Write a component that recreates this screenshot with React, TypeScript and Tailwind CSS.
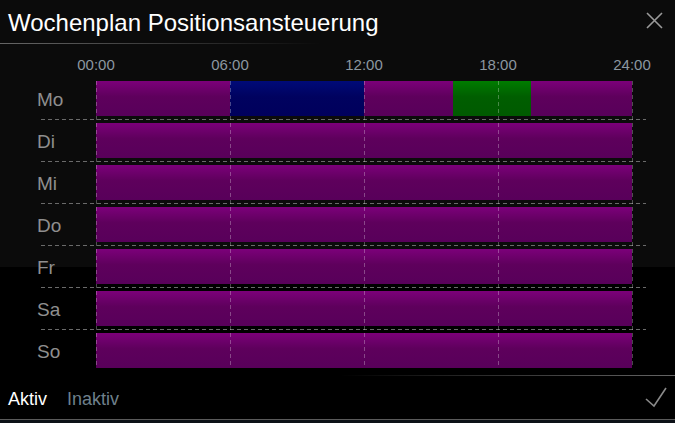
import React from "react";

type Segment = { from: number; to: number; mode: "aktiv" | "inaktiv" | "auf" };

const days: { name: string; segments: Segment[] }[] = [
  {
    name: "Mo",
    segments: [
      { from: 0, to: 6, mode: "aktiv" },
      { from: 6, to: 12, mode: "inaktiv" },
      { from: 12, to: 16, mode: "aktiv" },
      { from: 16, to: 19.5, mode: "auf" },
      { from: 19.5, to: 24, mode: "aktiv" },
    ],
  },
  { name: "Di", segments: [{ from: 0, to: 24, mode: "aktiv" }] },
  { name: "Mi", segments: [{ from: 0, to: 24, mode: "aktiv" }] },
  { name: "Do", segments: [{ from: 0, to: 24, mode: "aktiv" }] },
  { name: "Fr", segments: [{ from: 0, to: 24, mode: "aktiv" }] },
  { name: "Sa", segments: [{ from: 0, to: 24, mode: "aktiv" }] },
  { name: "So", segments: [{ from: 0, to: 24, mode: "aktiv" }] },
];

const ticks = ["00:00", "06:00", "12:00", "18:00", "24:00"];

const modeClass: Record<Segment["mode"], string> = {
  aktiv: "bg-[linear-gradient(to_bottom,#7c007a,#5e005c_45%,#58005a)]",
  inaktiv: "bg-[linear-gradient(to_bottom,#000a78,#00025f_45%,#00005c)]",
  auf: "bg-[linear-gradient(to_bottom,#007c00,#005e00_45%,#005a00)]",
};

export default function App() {
  return (
    <div
      className="w-[675px] h-[423px] flex flex-col overflow-hidden bg-[linear-gradient(to_bottom,#0b0b0b_267px,#000_267px)]"
      style={{ fontFamily: '"Liberation Sans", Arial, sans-serif' }}
    >
      {/* Header */}
      <div className="h-[43px] flex justify-between">
        <h1 className="pl-2 pt-[11px] text-[24px] leading-[24px] text-white">
          Wochenplan Positionsansteuerung
        </h1>
        <svg
          width="19"
          height="19"
          viewBox="0 0 19 19"
          className="mt-[11px] mr-[11px]"
          fill="none"
          stroke="#9a9a9a"
          strokeWidth="1.6"
        >
          <path d="M2 2 L17 17 M17 2 L2 17" />
        </svg>
      </div>
      <div className="h-px w-[320px] bg-gradient-to-r from-[#666] to-transparent" />

      {/* Time axis */}
      <div className="h-[37px] flex">
        <div className="w-[96px] shrink-0" />
        <div className="relative w-[536px]">
          {ticks.map((t, i) => (
            <span
              key={t}
              className="absolute top-[13px] -translate-x-1/2 text-[15px] leading-[15px] text-[#8c97a0]"
              style={{ left: `${(i / 4) * 100}%` }}
            >
              {t}
            </span>
          ))}
        </div>
      </div>

      {/* Grid */}
      <div className="relative flex flex-col">
        {days.map((d, i) => (
          <React.Fragment key={d.name}>
            {i > 0 && (
              <div className="h-[7px] py-[3px]">
                <div className="ml-[41px] w-[605px] h-px bg-[repeating-linear-gradient(to_right,#6a6a6a_0_4px,transparent_4px_7px)]" />
              </div>
            )}
            <div className="flex h-[35px]">
              <div className="w-[96px] shrink-0 pl-[37px] h-[35px] text-[19px] leading-[38px] text-[#8f8f8f]">
                {d.name}
              </div>
              <div className="w-[536px] flex">
                {d.segments.map((s, j) => (
                  <div
                    key={j}
                    className={modeClass[s.mode]}
                    style={{ width: `${((s.to - s.from) / 24) * 100}%` }}
                  />
                ))}
              </div>
            </div>
          </React.Fragment>
        ))}

        {/* vertical hour lines overlay */}
        <div className="absolute inset-y-0 left-[96px] w-[537px] flex justify-between pointer-events-none">
          {ticks.map((t) => (
            <div
              key={t}
              className="w-px h-full bg-[repeating-linear-gradient(to_bottom,rgba(255,255,255,0.28)_0_4px,transparent_4px_7px)]"
            />
          ))}
        </div>
      </div>

      {/* Footer */}
      <div className="mt-[7px] h-px bg-[linear-gradient(to_right,transparent_340px,#666)]" />
      <div className="h-[43px] flex">
        <div className="pt-[14px] pl-2 flex gap-[20px] text-[18px] leading-[18px]">
          <span className="text-white">Aktiv</span>
          <span className="text-[#6f808c]">Inaktiv</span>
        </div>
        <svg
          width="24"
          height="22"
          viewBox="0 0 24 22"
          className="ml-auto mt-[10px] mr-[7px]"
          fill="none"
          stroke="#8a8a8a"
          strokeWidth="1.6"
        >
          <path d="M2 13 L10 20 L22 2" />
        </svg>
      </div>
      <div className="h-px bg-[#5a5a5a]" />
      <div className="flex-1 bg-[#0c1117]" />
    </div>
  );
}
